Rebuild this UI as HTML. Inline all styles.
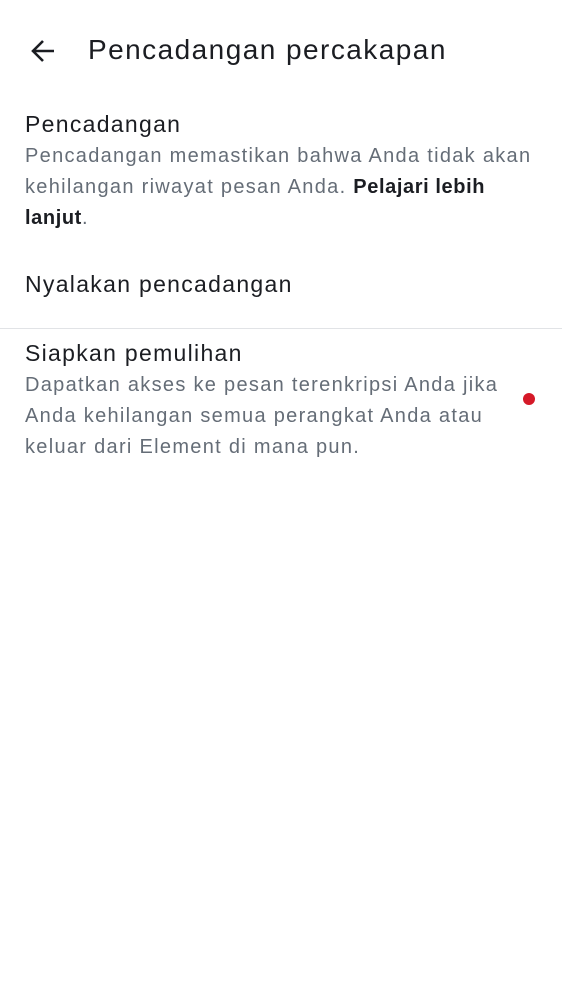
<!DOCTYPE html>
<html><head><meta charset="utf-8"><style>
body{margin:0;width:562px;height:1000px;background:#fff;font-family:"Liberation Sans",sans-serif;color:#1b1d22;position:relative;overflow:hidden}
.t{position:absolute;white-space:nowrap}
.h{font-size:23px;letter-spacing:1.3px;color:#1b1d22}
.s{font-size:20px;letter-spacing:1.3px;color:#656d77;line-height:31px}
.s b{color:#1b1d22;letter-spacing:0.6px}
</style></head><body>
<svg style="position:absolute;left:29px;top:37px" width="28" height="28" viewBox="0 0 28 28"><path d="M25 14H5M14 4L4 14l10 10" stroke="#1b1d22" stroke-width="2.6" fill="none"/></svg>
<div class="t" style="left:88px;top:34px;font-size:28px;letter-spacing:1.45px">Pencadangan percakapan</div>
<div class="t h" style="left:25px;top:111px">Pencadangan</div>
<div class="t s" style="left:25px;top:141px">Pencadangan memastikan bahwa Anda tidak akan<br>kehilangan riwayat pesan Anda. <b>Pelajari lebih</b><br><b>lanjut</b>.</div>
<div class="t h" style="left:25px;top:271px">Nyalakan pencadangan</div>
<div style="position:absolute;left:0;top:328px;width:562px;height:1px;background:#e1e3e6"></div>
<div class="t h" style="left:25px;top:340px">Siapkan pemulihan</div>
<div class="t s" style="left:25px;top:370px">Dapatkan akses ke pesan terenkripsi Anda jika<br>Anda kehilangan semua perangkat Anda atau<br>keluar dari Element di mana pun.</div>
<div style="position:absolute;left:523px;top:393px;width:12px;height:12px;border-radius:50%;background:#d51928"></div>
</body></html>
